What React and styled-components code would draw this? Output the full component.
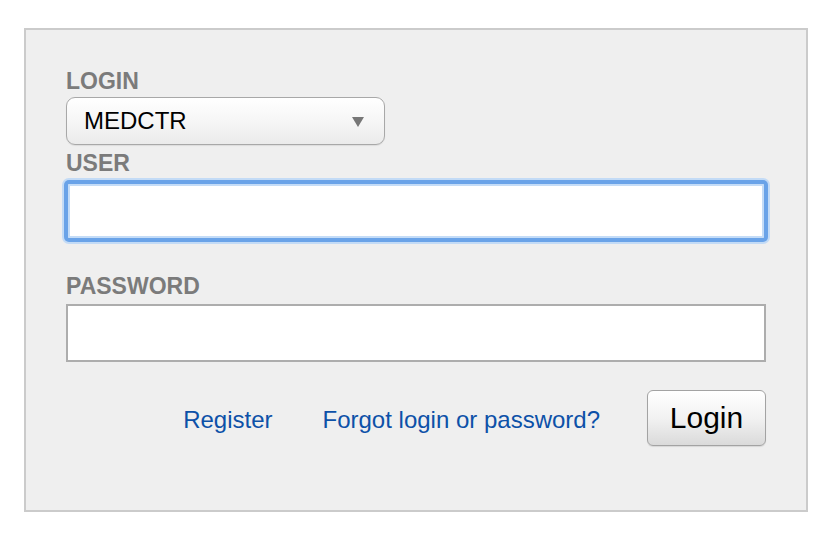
import React from 'react';
import styled, { createGlobalStyle } from 'styled-components';

const GlobalStyle = createGlobalStyle`
  body {
    margin: 0;
    background: #fff;
    font-family: "Liberation Sans", Arial, Helvetica, sans-serif;
  }
`;

const App = () => {
  return (
    <>
      <GlobalStyle />
      <Page>
        <Panel>
          <Label>LOGIN</Label>
          <Select>
            <SelectText>MEDCTR</SelectText>
            <Arrow />
          </Select>
          <Label $top={5}>USER</Label>
          <TextInput type="text" $focused $top={6} />
          <Label $top={33}>PASSWORD</Label>
          <TextInput type="password" $top={5} />
          <Actions>
            <Link href="#" $gap={50}>Register</Link>
            <Link href="#" $gap={47}>Forgot login or password?</Link>
            <LoginButton type="button">Login</LoginButton>
          </Actions>
        </Panel>
      </Page>
    </>
  );
};

const Page = styled.div`
  padding: 28px 0 0 24px;
`;

const Panel = styled.div`
  box-sizing: border-box;
  width: 784px;
  height: 484px;
  padding: 38px 40px 0 40px;
  background-color: #efefef;
  border: 2px solid #cbcbcb;
  display: flex;
  flex-direction: column;
  align-items: flex-start;
`;

const Label = styled.div`
  margin-top: ${(p) => p.$top || 0}px;
  font-size: 23px;
  line-height: 26px;
  font-weight: bold;
  color: #7b7b7b;
`;

const Select = styled.div`
  box-sizing: border-box;
  margin-top: 3px;
  width: 319px;
  height: 48px;
  padding: 0 20px 0 17px;
  display: flex;
  align-items: center;
  justify-content: space-between;
  border: 1px solid #a8a8a8;
  border-radius: 9px;
  background: linear-gradient(#ffffff 0%, #f6f6f6 50%, #ebebeb 100%);
  box-shadow: 0 1px 1px rgba(0, 0, 0, 0.08);
`;

const SelectText = styled.span`
  font-size: 24px;
  color: #000;
`;

const Arrow = styled.span`
  width: 0;
  height: 0;
  margin-top: 2px;
  border-left: 6px solid transparent;
  border-right: 6px solid transparent;
  border-top: 10px solid #777;
`;

const TextInput = styled.input`
  box-sizing: border-box;
  display: block;
  margin: ${(p) => p.$top || 0}px 0 0 0;
  width: 700px;
  height: 58px;
  padding: 0 10px;
  font-size: 22px;
  font-family: inherit;
  background: #fff;
  outline: none;
  border: 2px solid ${(p) => (p.$focused ? '#6aa3e8' : '#adadad')};
  box-shadow: ${(p) =>
    p.$focused
      ? 'inset 0 0 0 2px #c4dcf7, 0 0 0 2px #6aa3e8, 0 0 0 4px #c3dbf6'
      : 'none'};
  border-radius: ${(p) => (p.$focused ? '3px' : '0')};
`;

const Actions = styled.div`
  margin-top: 28px;
  width: 700px;
  display: flex;
  align-items: center;
  justify-content: flex-end;
`;

const Link = styled.a`
  margin-right: ${(p) => p.$gap}px;
  padding-top: 4px;
  font-size: 24px;
  color: #0d51a8;
  text-decoration: none;
`;

const LoginButton = styled.button`
  box-sizing: border-box;
  width: 119px;
  height: 56px;
  padding: 0;
  font-family: inherit;
  font-size: 30px;
  color: #000;
  border: 1px solid #a3a3a3;
  border-radius: 6px;
  background: linear-gradient(#ffffff 0%, #f2f2f2 50%, #dadada 100%);
  box-shadow: 0 1px 1px rgba(0, 0, 0, 0.1);
  cursor: pointer;
`;

export default App;
